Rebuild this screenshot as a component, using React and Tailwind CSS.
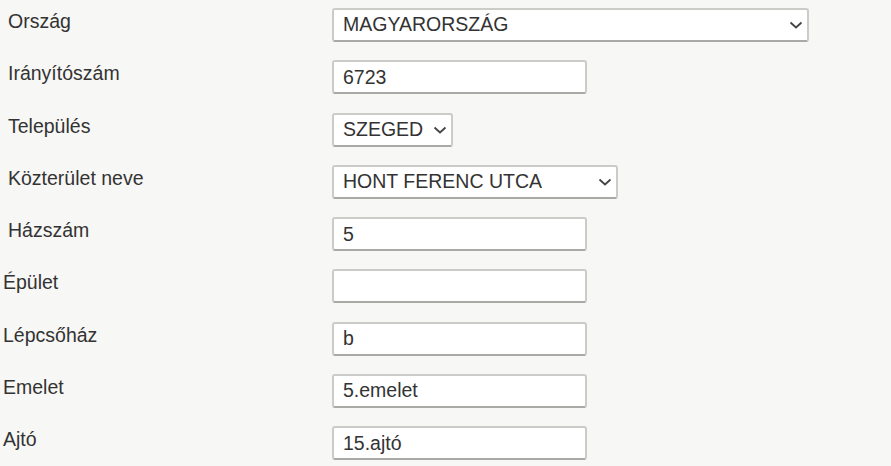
import { useState } from 'react';

const boxClass =
  'h-[34px] border-2 border-[#cbcbc7] border-b-[#a9a9a5] rounded-[3px] bg-white pl-[9px] pr-[8px] text-[19.5px] text-[#333] outline-none';

const Chevron = () => (
  <svg
    className="pointer-events-none absolute right-[6px] top-[13px]"
    width="14"
    height="8"
    viewBox="0 0 14 8"
    fill="none"
  >
    <path d="M1.5 1.5 L7 6.5 L12.5 1.5" stroke="#444" strokeWidth="1.8" />
  </svg>
);

const SelectBox = ({ value, width }) => (
  <div className={`relative ${width}`}>
    <select
      defaultValue={value}
      className={`${boxClass} w-full appearance-none pr-[28px]`}
    >
      <option value={value}>{value}</option>
    </select>
    <Chevron />
  </div>
);

const Row = ({ label, indent, children }) => (
  <div className="flex h-[34px] items-start">
    <label className={`w-[332px] shrink-0 pt-[2px] leading-[22px] ${indent ? 'pl-[8px]' : 'pl-[3px]'}`}>
      {label}
    </label>
    {children}
  </div>
);

const App = () => {
  const [fields, setFields] = useState({
    hazszam: '5',
    epulet: '',
    lepcsohaz: 'b',
    emelet: '5.emelet',
    ajto: '15.ajtó',
    irsz: '6723',
  });

  const input = (key) => (
    <input
      type="text"
      className={`${boxClass} w-[255px]`}
      value={fields[key]}
      onChange={(e) => setFields({ ...fields, [key]: e.target.value })}
    />
  );

  return (
    <div
      className="min-h-[466px] bg-[#f7f7f5] pt-[8px] text-[19.5px] text-[#333]"
      style={{ fontFamily: '"Liberation Sans", Arial, sans-serif' }}
    >
      <div className="flex flex-col gap-[18.25px]">
        <Row label="Ország" indent>
          <SelectBox value="MAGYARORSZÁG" width="w-[477px]" />
        </Row>
        <Row label="Irányítószám" indent>
          {input('irsz')}
        </Row>
        <Row label="Település" indent>
          <SelectBox value="SZEGED" width="w-[121px]" />
        </Row>
        <Row label="Közterület neve" indent>
          <SelectBox value="HONT FERENC UTCA" width="w-[286px]" />
        </Row>
        <Row label="Házszám" indent>
          {input('hazszam')}
        </Row>
        <Row label="Épület">{input('epulet')}</Row>
        <Row label="Lépcsőház">{input('lepcsohaz')}</Row>
        <Row label="Emelet">{input('emelet')}</Row>
        <Row label="Ajtó">{input('ajto')}</Row>
      </div>
    </div>
  );
};

export default App;
